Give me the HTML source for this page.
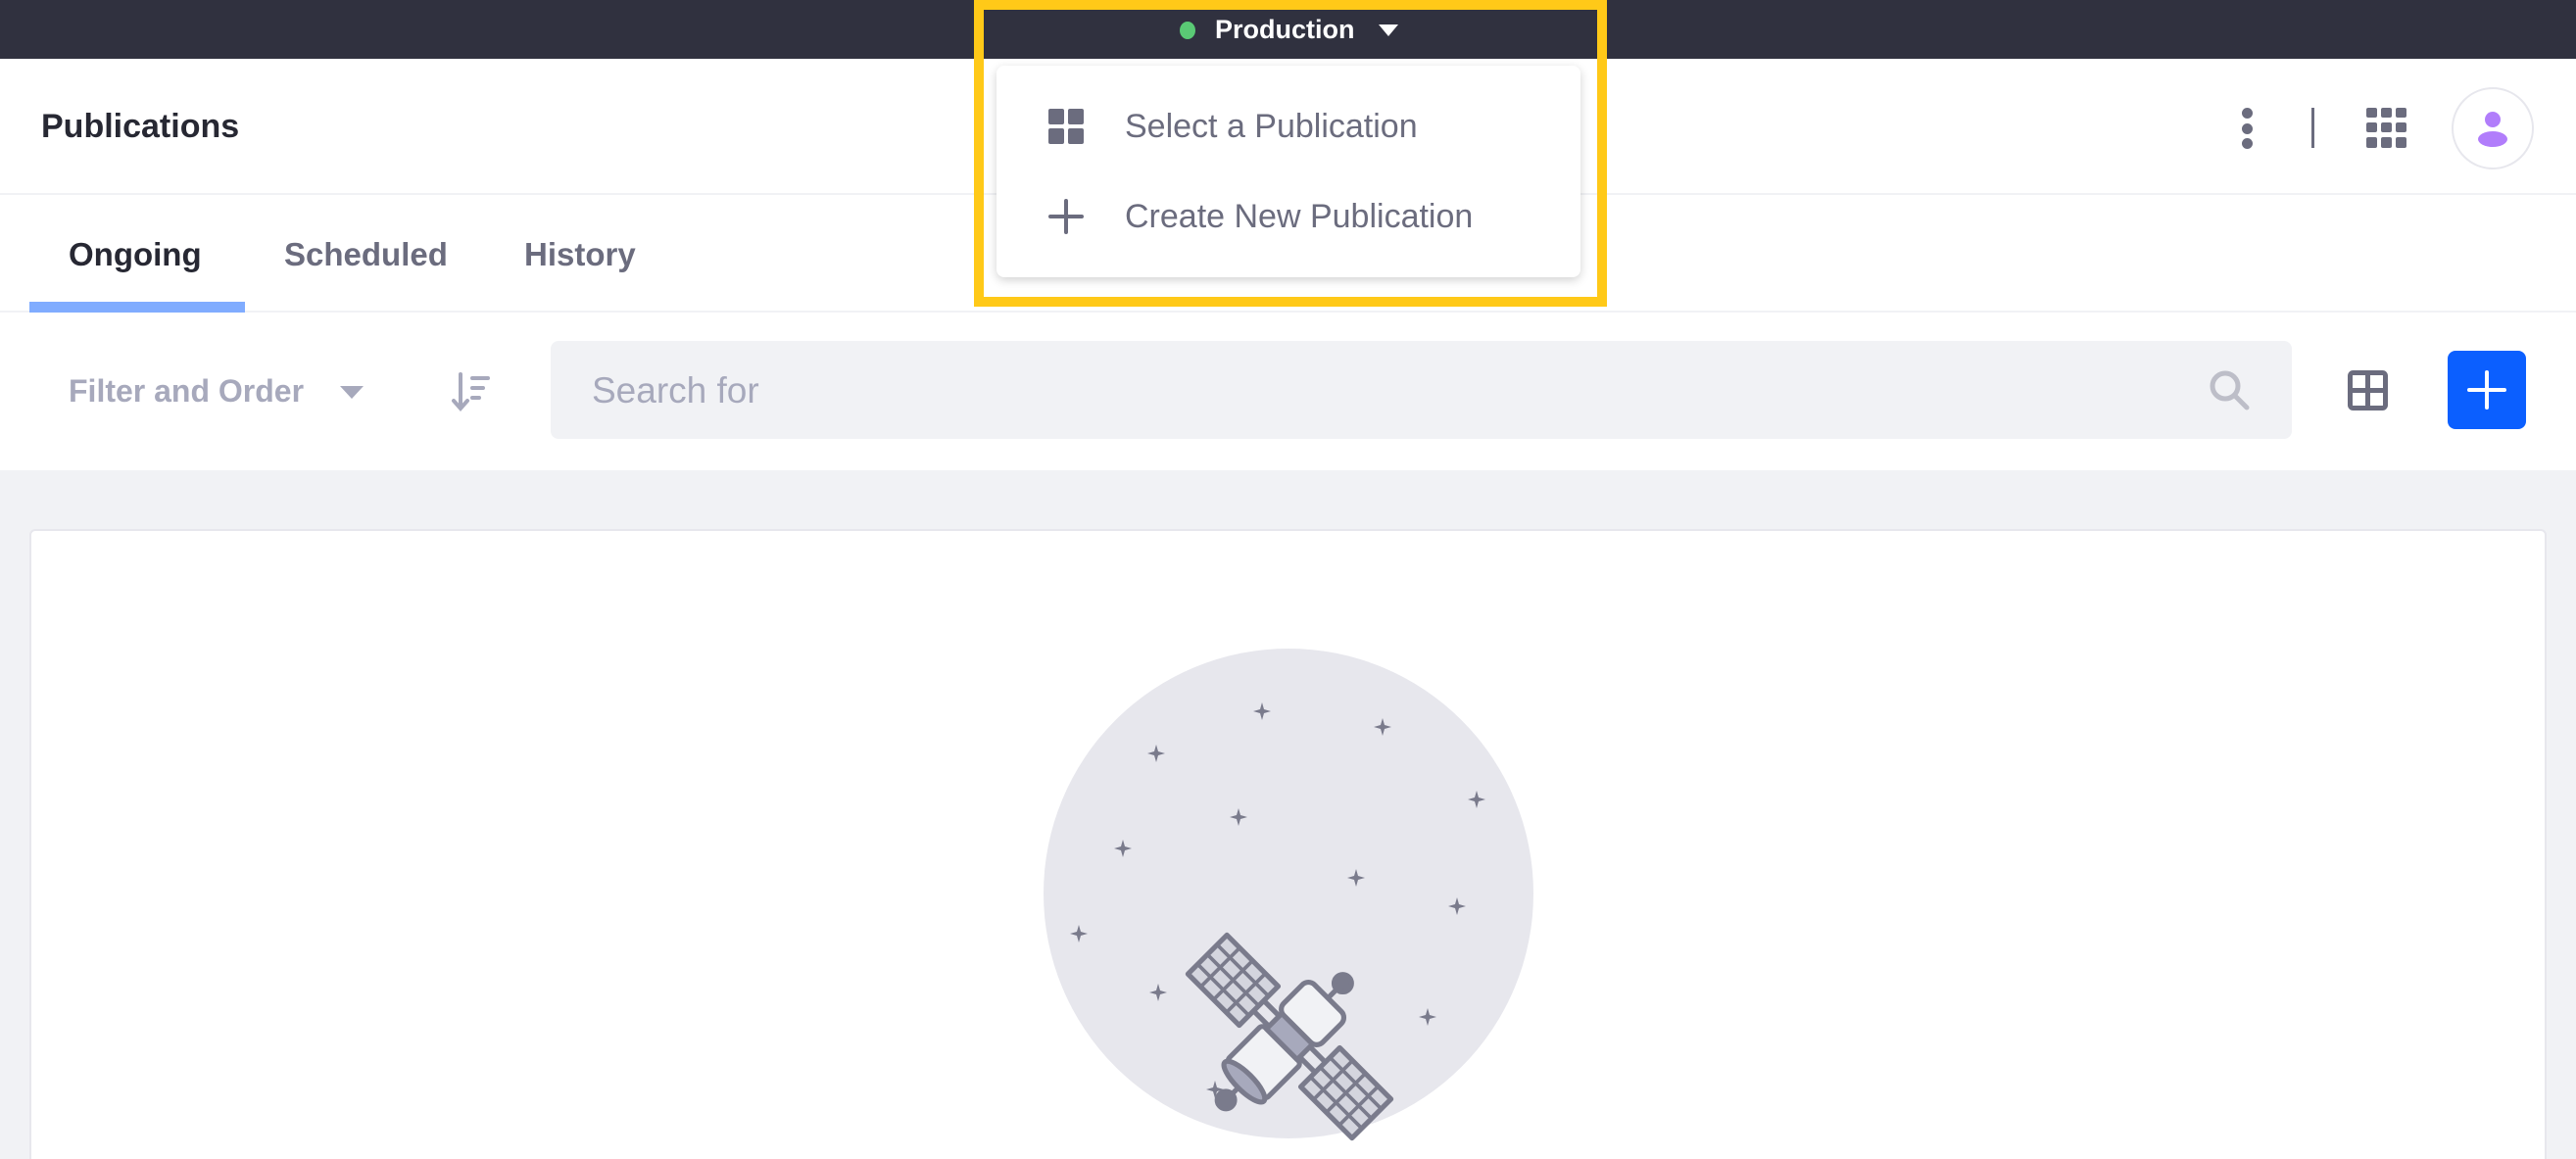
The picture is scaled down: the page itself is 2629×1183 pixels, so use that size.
<!DOCTYPE html>
<html style="width:2629px;height:1183px;overflow:hidden"><head><meta charset="utf-8"><style>
*{margin:0;padding:0;box-sizing:border-box}
body{width:2629px;height:1183px;overflow:hidden;background:#f1f2f5;font-family:"Liberation Sans",sans-serif;position:relative}
.abs{position:absolute}
</style></head><body>
<div class="abs" style="left:0;top:0;width:2629px;height:60px;background:#30313f"></div>
<div class="abs" style="left:0;top:60px;width:2629px;height:420px;background:#fff"></div>
<div class="abs" style="left:0;top:197px;width:2629px;height:2px;background:#f1f2f5"></div>
<div class="abs" style="left:0;top:317px;width:2629px;height:2px;background:#f1f2f5"></div>
<div class="abs" style="left:30px;top:308px;width:220px;height:11px;background:#80acff"></div>

<div class="abs" style="left:1204px;top:22px;width:16px;height:18px;border-radius:50%;background:#5aca75"></div>
<div class="abs" style="left:1240px;top:15px;font-size:27px;font-weight:bold;color:#fff">Production</div>
<div class="abs" style="left:1407px;top:25px;width:0;height:0;border-left:10px solid transparent;border-right:10px solid transparent;border-top:12px solid #fff"></div>

<div class="abs" style="left:42px;top:110px;font-size:34px;font-weight:bold;color:#272833">Publications</div>

<div class="abs" style="left:70px;top:241px;font-size:33px;font-weight:bold;color:#272833">Ongoing</div>
<div class="abs" style="left:290px;top:241px;font-size:33px;font-weight:bold;color:#6b6c7e">Scheduled</div>
<div class="abs" style="left:535px;top:241px;font-size:33px;font-weight:bold;color:#6b6c7e">History</div>

<div class="abs" style="left:2288px;top:110px;width:11px;height:11px;border-radius:50%;background:#6b6c7e"></div>
<div class="abs" style="left:2288px;top:126px;width:11px;height:11px;border-radius:50%;background:#6b6c7e"></div>
<div class="abs" style="left:2288px;top:141px;width:11px;height:11px;border-radius:50%;background:#6b6c7e"></div>
<div class="abs" style="left:2359px;top:110px;width:3px;height:41px;background:#6b6c7e"></div>
<svg class="abs" style="left:2415px;top:110px" width="41" height="41" viewBox="0 0 41 41" fill="#6b6c7e">
<rect x="0" y="0" width="11" height="10" rx="2"/><rect x="15" y="0" width="11" height="10" rx="2"/><rect x="30" y="0" width="11" height="10" rx="2"/>
<rect x="0" y="15" width="11" height="10" rx="2"/><rect x="15" y="15" width="11" height="10" rx="2"/><rect x="30" y="15" width="11" height="10" rx="2"/>
<rect x="0" y="30" width="11" height="11" rx="2"/><rect x="15" y="30" width="11" height="11" rx="2"/><rect x="30" y="30" width="11" height="11" rx="2"/></svg>
<div class="abs" style="left:2502px;top:89px;width:84px;height:84px;border-radius:50%;border:2px solid #e7e7ed;background:#fff"></div>
<svg class="abs" style="left:2524px;top:110px" width="40" height="40" viewBox="0 0 40 40" fill="#b17dfb"><circle cx="20" cy="12" r="8"/><ellipse cx="20" cy="32" rx="15" ry="8"/></svg>

<div class="abs" style="left:70px;top:381px;font-size:32px;font-weight:bold;color:#a7a9bc">Filter and Order</div>
<div class="abs" style="left:347px;top:394px;border-left:12px solid transparent;border-right:12px solid transparent;border-top:13px solid #a7a9bc"></div>
<svg class="abs" style="left:460px;top:378px" width="44" height="44" viewBox="0 0 44 44" stroke="#a7a9bc" stroke-width="4" stroke-linecap="round" fill="none"><path d="M10 4v34M3 31l7 8 7-8"/><path d="M22 8h16M22 18h11M22 28h7"/></svg>
<div class="abs" style="left:562px;top:348px;width:1777px;height:100px;background:#f1f2f5;border-radius:8px"></div>
<div class="abs" style="left:604px;top:378px;font-size:37px;color:#a7a9bc">Search for</div>
<svg class="abs" style="left:2253px;top:376px" width="46" height="46" viewBox="0 0 46 46" stroke="#bdbec8" stroke-width="5" fill="none" stroke-linecap="round"><circle cx="18" cy="18" r="13"/><path d="M28 28l12 12"/></svg>
<svg class="abs" style="left:2396px;top:378px" width="41" height="41" viewBox="0 0 41 41" fill="none" stroke="#6b6c7e" stroke-width="5"><rect x="2.5" y="2.5" width="36" height="36" rx="3"/><path d="M20.5 2v37M2 20.5h37"/></svg>
<div class="abs" style="left:2498px;top:358px;width:80px;height:80px;background:#0b5fff;border-radius:8px"></div>
<svg class="abs" style="left:2518px;top:378px" width="40" height="40" viewBox="0 0 40 40" stroke="#fff" stroke-width="4" stroke-linecap="round"><path d="M20 2v36M2 20h36"/></svg>

<div class="abs" style="left:30px;top:540px;width:2569px;height:660px;background:#fff;border:2px solid #e7e7ed;border-radius:6px"></div>
<svg class="abs" style="left:1060px;top:660px" width="510" height="523" viewBox="1060 660 510 523">
<circle cx="1315" cy="912" r="250" fill="#e7e7ed"/>
<g fill="#7a7b8c">
<g id="s"><path d="M0 -9 L2 -2 L9 0 L2 2 L0 9 L-2 2 L-9 0 L-2 -2Z"/></g>
<use href="#s" x="1288" y="726"/><use href="#s" x="1411" y="742"/><use href="#s" x="1180" y="769"/>
<use href="#s" x="1507" y="816"/><use href="#s" x="1264" y="834"/><use href="#s" x="1146" y="866"/>
<use href="#s" x="1384" y="896"/><use href="#s" x="1487" y="925"/><use href="#s" x="1101" y="953"/>
<use href="#s" x="1182" y="1013"/><use href="#s" x="1457" y="1038"/><use href="#s" x="1240" y="1112"/>
</g>
<g transform="translate(1316,1058) rotate(-45) scale(0.74)" stroke="#7a7b8c" stroke-width="7" stroke-linejoin="round">
<rect x="-38" y="-160" width="76" height="100" fill="#d4d5de"/>
<rect x="-38" y="60" width="76" height="100" fill="#d4d5de"/>
<path d="M-38 -135h76M-38 -110h76M-38 -85h76M-19 -160v100M0 -160v100M19 -160v100" fill="none" stroke-width="5"/>
<path d="M-38 85h76M-38 110h76M-38 135h76M-19 60v100M0 60v100M19 60v100" fill="none" stroke-width="5"/>
<path d="M-10 -60v120M10 -60v120" fill="none"/>
<rect x="-85" y="-38" width="70" height="76" rx="6" fill="#f1f2f5"/>
<rect x="15" y="-38" width="60" height="76" rx="12" fill="#f1f2f5"/>
<rect x="-15" y="-30" width="30" height="60" fill="#a7a9bc"/>
<ellipse cx="-88" cy="0" rx="12" ry="38" fill="#a7a9bc"/>
<path d="M75 0h22M-100 0h-18" fill="none"/>
<circle cx="104" cy="0" r="12" fill="#7a7b8c"/><circle cx="-124" cy="0" r="12" fill="#7a7b8c"/>
</g>
</svg>

<div class="abs" style="left:994px;top:0;width:646px;height:313px;border:10px solid #ffc918"></div>
<div class="abs" style="left:1017px;top:67px;width:596px;height:216px;background:#fff;border-radius:8px;box-shadow:0 3px 10px rgba(0,0,0,0.18)"></div>
<svg class="abs" style="left:1070px;top:111px" width="36" height="36" viewBox="0 0 36 36" fill="#6b6c7e"><rect x="0" y="0" width="16" height="16" rx="2"/><rect x="20" y="0" width="16" height="16" rx="2"/><rect x="0" y="20" width="16" height="16" rx="2"/><rect x="20" y="20" width="16" height="16" rx="2"/></svg>
<div class="abs" style="left:1148px;top:110px;font-size:34px;color:#6b6c7e">Select a Publication</div>
<svg class="abs" style="left:1070px;top:203px" width="36" height="36" viewBox="0 0 36 36" stroke="#6b6c7e" stroke-width="4" stroke-linecap="round"><path d="M18 2v32M2 18h32"/></svg>
<div class="abs" style="left:1148px;top:202px;font-size:34px;color:#6b6c7e">Create New Publication</div>
</body></html>
